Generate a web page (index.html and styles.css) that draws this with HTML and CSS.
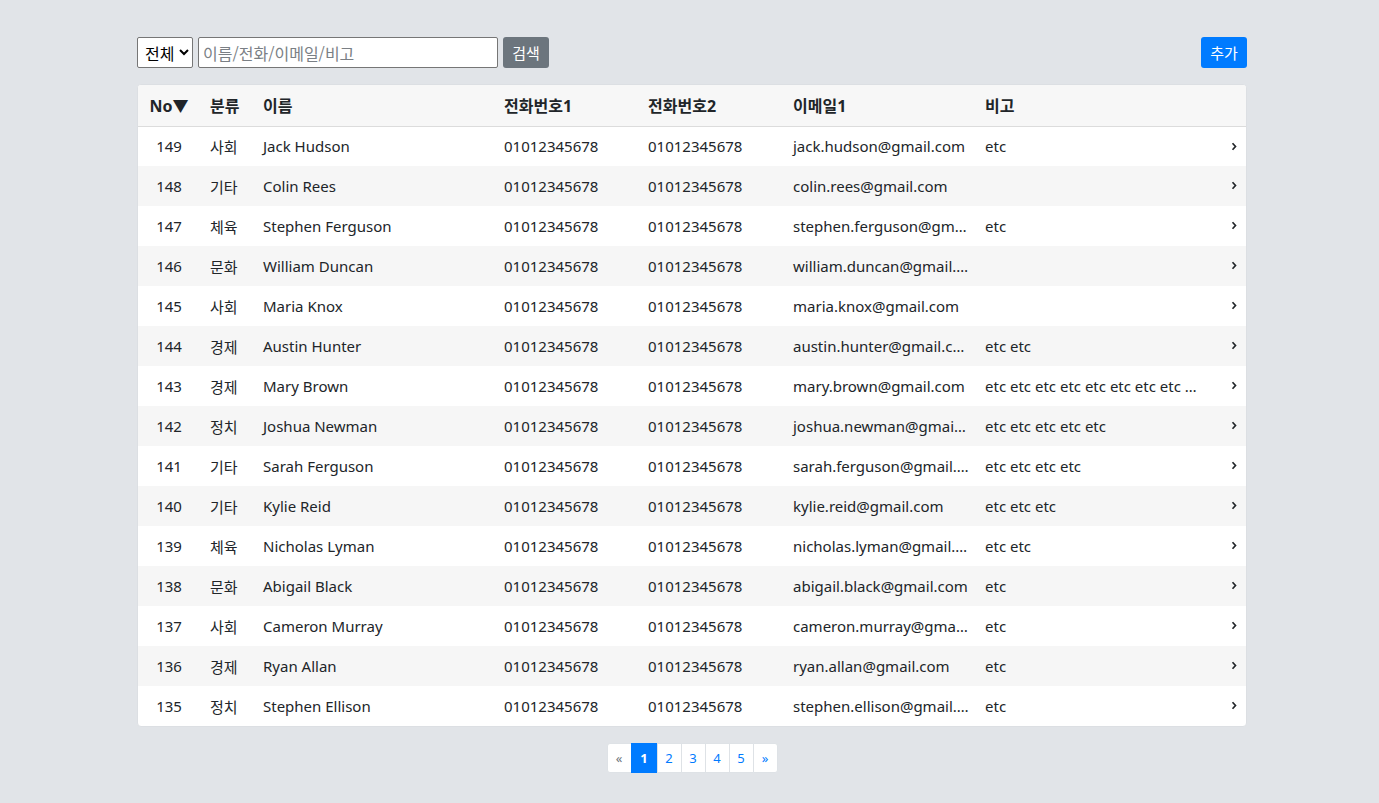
FILE: index.html
```html
<!DOCTYPE html>
<html lang="ko">
<head>
<meta charset="utf-8">
<title>목록</title>
<link rel="stylesheet" href="styles.css">
</head>
<body>
<div class="wrap">
  <div class="toolbar">
    <div class="search">
      <select class="sel"><option>전체</option></select>
      <input class="inp" type="text" placeholder="이름/전화/이메일/비고">
      <button class="btn btn-gray">검색</button>
    </div>
    <button class="btn btn-blue">추가</button>
  </div>
  <div class="card">
    <table class="tbl">
      <colgroup>
        <col class="c-no"><col class="c-cat"><col class="c-name"><col class="c-ph1"><col class="c-ph2"><col class="c-mail"><col class="c-note"><col class="c-go">
      </colgroup>
      <thead>
        <tr><th class="num">No▼</th><th>분류</th><th>이름</th><th>전화번호1</th><th>전화번호2</th><th>이메일1</th><th>비고</th><th></th></tr>
      </thead>
      <tbody id="rows">
        <tr><td class="num">149</td><td>사회</td><td>Jack Hudson</td><td>01012345678</td><td>01012345678</td><td class="mail">jack.hudson@gmail.com</td><td>etc</td><td class="go"><svg viewBox="0 0 6 9" width="6" height="9"><path d="M1.5 1.2 L4.5 4.5 L1.5 7.8" fill="none" stroke="#212529" stroke-width="1.7"/></svg></td></tr>
        <tr><td class="num">148</td><td>기타</td><td>Colin Rees</td><td>01012345678</td><td>01012345678</td><td class="mail">colin.rees@gmail.com</td><td></td><td class="go"><svg viewBox="0 0 6 9" width="6" height="9"><path d="M1.5 1.2 L4.5 4.5 L1.5 7.8" fill="none" stroke="#212529" stroke-width="1.7"/></svg></td></tr>
        <tr><td class="num">147</td><td>체육</td><td>Stephen Ferguson</td><td>01012345678</td><td>01012345678</td><td class="mail">stephen.ferguson@gmail.com</td><td>etc</td><td class="go"><svg viewBox="0 0 6 9" width="6" height="9"><path d="M1.5 1.2 L4.5 4.5 L1.5 7.8" fill="none" stroke="#212529" stroke-width="1.7"/></svg></td></tr>
        <tr><td class="num">146</td><td>문화</td><td>William Duncan</td><td>01012345678</td><td>01012345678</td><td class="mail">william.duncan@gmail.com</td><td></td><td class="go"><svg viewBox="0 0 6 9" width="6" height="9"><path d="M1.5 1.2 L4.5 4.5 L1.5 7.8" fill="none" stroke="#212529" stroke-width="1.7"/></svg></td></tr>
        <tr><td class="num">145</td><td>사회</td><td>Maria Knox</td><td>01012345678</td><td>01012345678</td><td class="mail">maria.knox@gmail.com</td><td></td><td class="go"><svg viewBox="0 0 6 9" width="6" height="9"><path d="M1.5 1.2 L4.5 4.5 L1.5 7.8" fill="none" stroke="#212529" stroke-width="1.7"/></svg></td></tr>
        <tr><td class="num">144</td><td>경제</td><td>Austin Hunter</td><td>01012345678</td><td>01012345678</td><td class="mail">austin.hunter@gmail.com</td><td>etc etc</td><td class="go"><svg viewBox="0 0 6 9" width="6" height="9"><path d="M1.5 1.2 L4.5 4.5 L1.5 7.8" fill="none" stroke="#212529" stroke-width="1.7"/></svg></td></tr>
        <tr><td class="num">143</td><td>경제</td><td>Mary Brown</td><td>01012345678</td><td>01012345678</td><td class="mail">mary.brown@gmail.com</td><td>etc etc etc etc etc etc etc etc etc etc</td><td class="go"><svg viewBox="0 0 6 9" width="6" height="9"><path d="M1.5 1.2 L4.5 4.5 L1.5 7.8" fill="none" stroke="#212529" stroke-width="1.7"/></svg></td></tr>
        <tr><td class="num">142</td><td>정치</td><td>Joshua Newman</td><td>01012345678</td><td>01012345678</td><td class="mail">joshua.newman@gmail.com</td><td>etc etc etc etc etc</td><td class="go"><svg viewBox="0 0 6 9" width="6" height="9"><path d="M1.5 1.2 L4.5 4.5 L1.5 7.8" fill="none" stroke="#212529" stroke-width="1.7"/></svg></td></tr>
        <tr><td class="num">141</td><td>기타</td><td>Sarah Ferguson</td><td>01012345678</td><td>01012345678</td><td class="mail">sarah.ferguson@gmail.com</td><td>etc etc etc etc</td><td class="go"><svg viewBox="0 0 6 9" width="6" height="9"><path d="M1.5 1.2 L4.5 4.5 L1.5 7.8" fill="none" stroke="#212529" stroke-width="1.7"/></svg></td></tr>
        <tr><td class="num">140</td><td>기타</td><td>Kylie Reid</td><td>01012345678</td><td>01012345678</td><td class="mail">kylie.reid@gmail.com</td><td>etc etc etc</td><td class="go"><svg viewBox="0 0 6 9" width="6" height="9"><path d="M1.5 1.2 L4.5 4.5 L1.5 7.8" fill="none" stroke="#212529" stroke-width="1.7"/></svg></td></tr>
        <tr><td class="num">139</td><td>체육</td><td>Nicholas Lyman</td><td>01012345678</td><td>01012345678</td><td class="mail">nicholas.lyman@gmail.com</td><td>etc etc</td><td class="go"><svg viewBox="0 0 6 9" width="6" height="9"><path d="M1.5 1.2 L4.5 4.5 L1.5 7.8" fill="none" stroke="#212529" stroke-width="1.7"/></svg></td></tr>
        <tr><td class="num">138</td><td>문화</td><td>Abigail Black</td><td>01012345678</td><td>01012345678</td><td class="mail">abigail.black@gmail.com</td><td>etc</td><td class="go"><svg viewBox="0 0 6 9" width="6" height="9"><path d="M1.5 1.2 L4.5 4.5 L1.5 7.8" fill="none" stroke="#212529" stroke-width="1.7"/></svg></td></tr>
        <tr><td class="num">137</td><td>사회</td><td>Cameron Murray</td><td>01012345678</td><td>01012345678</td><td class="mail">cameron.murray@gmail.com</td><td>etc</td><td class="go"><svg viewBox="0 0 6 9" width="6" height="9"><path d="M1.5 1.2 L4.5 4.5 L1.5 7.8" fill="none" stroke="#212529" stroke-width="1.7"/></svg></td></tr>
        <tr><td class="num">136</td><td>경제</td><td>Ryan Allan</td><td>01012345678</td><td>01012345678</td><td class="mail">ryan.allan@gmail.com</td><td>etc</td><td class="go"><svg viewBox="0 0 6 9" width="6" height="9"><path d="M1.5 1.2 L4.5 4.5 L1.5 7.8" fill="none" stroke="#212529" stroke-width="1.7"/></svg></td></tr>
        <tr><td class="num">135</td><td>정치</td><td>Stephen Ellison</td><td>01012345678</td><td>01012345678</td><td class="mail">stephen.ellison@gmail.com</td><td>etc</td><td class="go"><svg viewBox="0 0 6 9" width="6" height="9"><path d="M1.5 1.2 L4.5 4.5 L1.5 7.8" fill="none" stroke="#212529" stroke-width="1.7"/></svg></td></tr>
      </tbody>
    </table>
  </div>
  <nav class="pager">
    <a class="pg pg-muted">«</a>
    <a class="pg pg-active">1</a>
    <a class="pg">2</a>
    <a class="pg">3</a>
    <a class="pg">4</a>
    <a class="pg">5</a>
    <a class="pg">»</a>
  </nav>
</div>
</body>
</html>
```

FILE: styles.css
```css
* { box-sizing: border-box; }
html, body { margin: 0; padding: 0; }
body {
  background: #e1e4e8;
  font-family: "Noto Sans", "Noto Sans CJK KR", sans-serif;
  font-size: 15px;
  color: #212529;
}
.wrap {
  width: 1110px;
  margin-left: 137px;
  padding-top: 37px;
}
.toolbar {
  display: flex;
  justify-content: space-between;
  align-items: center;
  height: 31px;
}
.search {
  display: flex;
  gap: 5px;
  height: 31px;
}
.sel {
  width: 56px;
  height: 31px;
  font-family: "Noto Sans CJK KR", sans-serif;
  font-size: 16px;
  color: #000;
  border: 1px solid #767676;
  border-radius: 2px;
  background: #fff;
  padding: 0 0 0 3px;
}
.inp {
  width: 300px;
  height: 31px;
  font-family: "Noto Sans CJK KR", sans-serif;
  font-size: 16px;
  border: 1px solid #767676;
  border-radius: 2px;
  padding: 0 4px;
}
.inp::placeholder { color: #7a7f85; }
.btn {
  height: 31px;
  width: 46px;
  border: none;
  border-radius: 3px;
  color: #fff;
  font-family: "Noto Sans CJK KR", sans-serif;
  font-size: 15px;
  padding: 0;
}
.btn-gray { background: #6c757d; }
.btn-blue { background: #007bff; }
.card {
  margin-top: 16px;
  background: #fff;
  border: 1px solid #dcdfe3;
  border-radius: 4px;
  overflow: hidden;
}
.tbl {
  width: 100%;
  border-collapse: collapse;
  table-layout: fixed;
}
.c-no { width: 62px; }
.c-cat { width: 53px; }
.c-name { width: 241px; }
.c-ph1 { width: 144px; }
.c-ph2 { width: 145px; }
.c-mail { width: 192px; }
.c-note { width: 237px; }
.c-go { width: 34px; }
.tbl th {
  background: #f7f7f7;
  height: 41px;
  font-weight: 700;
  font-size: 16px;
  text-align: left;
  padding: 0 10px;
  border-bottom: 1px solid #dcdcdc;
  white-space: nowrap;
}
.tbl td {
  height: 40px;
  padding: 0 10px;
  white-space: nowrap;
  overflow: hidden;
  text-overflow: ellipsis;
}
.tbl td.mail { padding-right: 6px; }
.tbl tbody tr:nth-child(even) td { background: #f6f6f6; }
.tbl .num { text-align: center; padding: 0; }
.tbl .go { text-align: right; padding: 0 9px 0 0; text-overflow: clip; }
.go svg { display: inline-block; vertical-align: middle; margin-top: -4px; }
.pager {
  display: flex;
  justify-content: center;
  margin-top: 16px;
}
.pg {
  display: flex;
  align-items: center;
  justify-content: center;
  height: 30px;
  width: 25px;
  font-size: 13px;
  color: #007bff;
  background: #fff;
  border: 1px solid #dee2e6;
  margin-left: -1px;
}
.pg:first-child { border-radius: 3px 0 0 3px; margin-left: 0; }
.pg:last-child { border-radius: 0 3px 3px 0; }
.pg-muted { color: #6c757d; }
.pg-active { width: 27px; background: #007bff; color: #fff; border-color: #007bff; font-weight: 700; }
```
